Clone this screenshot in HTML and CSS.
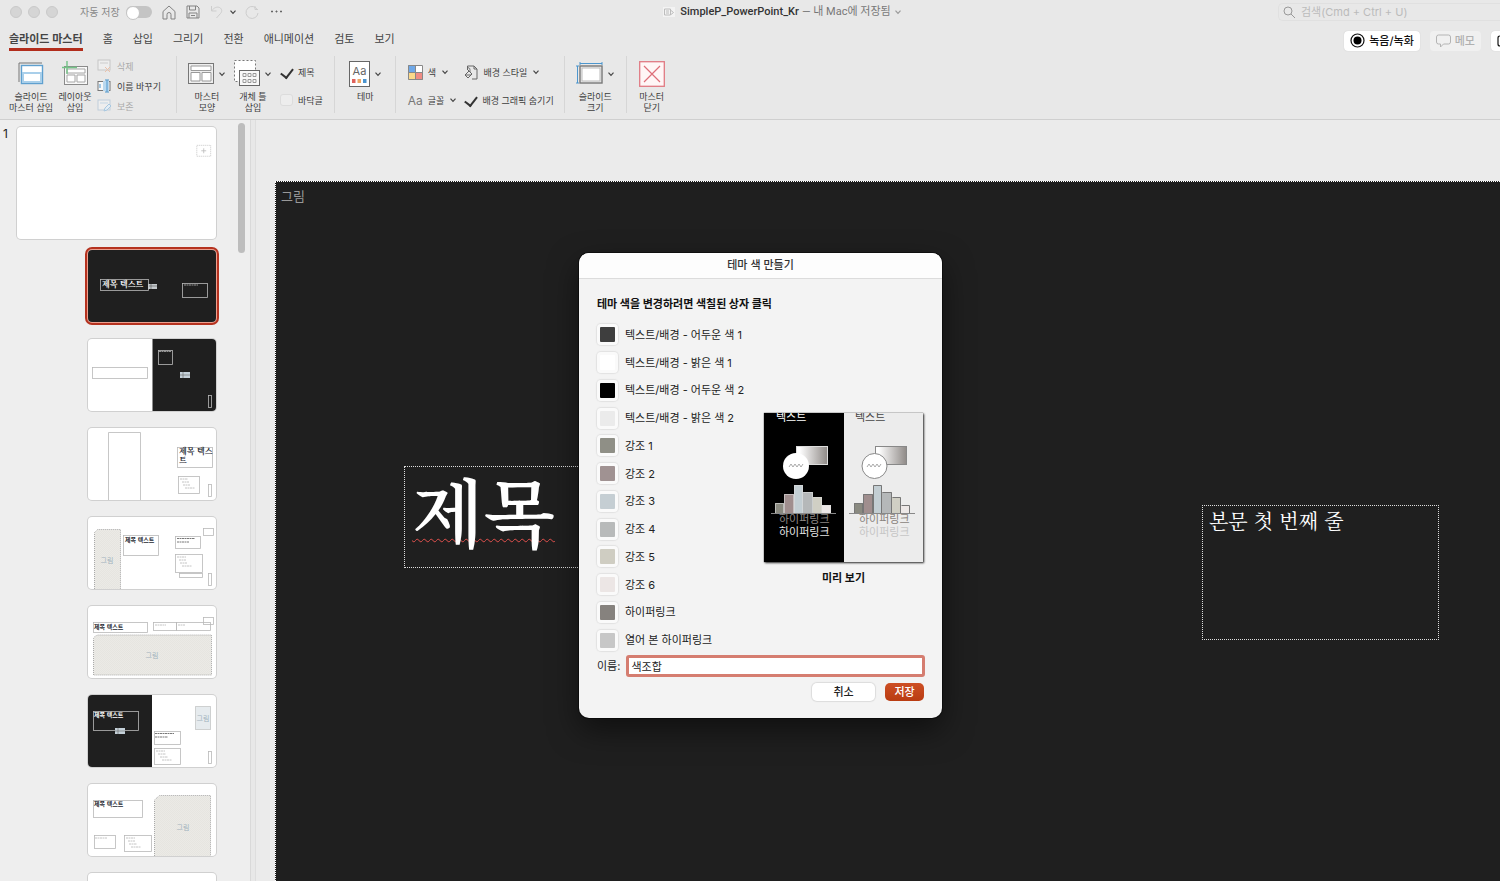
FILE: index.html
```html
<!DOCTYPE html>
<html lang="ko">
<head>
<meta charset="utf-8">
<title>SimpleP_PowerPoint_Kr</title>
<link rel="stylesheet" href="styles.css">
</head>
<body>
<svg class="defs" width="0" height="0" aria-hidden="true">
  <defs>
    <symbol id="chev" viewBox="0 0 8 8"><path d="M1.5 2.7 4 5.3l2.500-2.600" fill="none" stroke="currentColor" stroke-width="1.2"/></symbol>
    <pattern id="weave" width="2" height="2" patternUnits="userSpaceOnUse"><rect width="2" height="2" fill="#ebeae6"/><path d="M0 0h1v1H0zM1 1h1v1H1z" fill="#e6e5e0"/></pattern>
    <linearGradient id="fade"><stop offset=".1" stop-color="#fff"/><stop offset="1" stop-color="#8f8a87"/></linearGradient>
  </defs>
</svg>
<div class="app">
  <header class="chrome">
    <div class="titlebar">
      <div class="quick">
        <span class="lights"><i></i><i></i><i></i></span>
        <label class="autosave">자동 저장 <input type="checkbox" class="switch"></label>
        <button class="ico" aria-label="홈"><svg width="14" height="15" viewBox="0 0 14 15"><path d="M1 6.500 7 1l6 5.500V14H9V9.500a2 2 0 0 0-4 0V14H1z"/></svg></button>
        <button class="ico save-ico" aria-label="파일 저장"><svg width="14" height="14" viewBox="0 0 14 14"><path d="M1 1h10l2 2v10H1zM3.500 1v4h6V1M3 13V8h8v5M5 10.500h4"/></svg></button>
        <button class="ico dim" aria-label="실행 취소"><svg width="13" height="14" viewBox="0 0 13 14"><path d="M1.500 1v5h5M1.500 6C4 2.500 7 1.500 9.500 2.500c3 1.500 2.500 4.500 1 6L6.500 13"/></svg></button>
        <svg class="chev dark" width="8" height="8"><use href="#chev"/></svg>
        <button class="ico dim" aria-label="다시 실행"><svg width="14" height="14" viewBox="0 0 14 14"><path d="M10 1v3.500h3M12.500 5A6 6 0 1 0 13 8"/></svg></button>
        <button class="ico more" aria-label="더 보기"><svg width="13" height="4" viewBox="0 0 13 4"><path d="M1.500 1h1v1h-1zM6 1h1v1H6zM10.500 1h1v1h-1z"/></svg></button>
      </div>
      <div class="doc">
        <svg width="12" height="10" viewBox="0 0 12 10"><rect width="12" height="10" fill="#f3f3f3"/><path d="M1.500 2h6v6h-6zM3 4h3M3 6h3M8 3.500 10.500 5.500 8 7.500" fill="none" stroke="#bcbcbc"/></svg>
        <b>SimpleP_PowerPoint_Kr</b><span>— 내 Mac에 저장됨</span><svg class="chev" width="8" height="8"><use href="#chev"/></svg>
      </div>
      <label class="search">
        <svg width="13" height="13" viewBox="0 0 13 13"><circle cx="5" cy="5" r="4"/><path d="m8 8 4 4"/></svg>
        <input type="text" placeholder="검색(Cmd + Ctrl + U)" aria-label="검색">
      </label>
    </div>

    <div class="tabrow">
      <nav class="tabs">
        <a href="#" class="on">슬라이드 마스터</a><a href="#">홈</a><a href="#">삽입</a><a href="#">그리기</a><a href="#">전환</a><a href="#">애니메이션</a><a href="#">검토</a><a href="#">보기</a>
      </nav>
      <div class="actions">
        <button class="pill"><svg width="15" height="15" viewBox="0 0 15 15"><circle cx="7.500" cy="7.500" r="6.500" fill="none" stroke="#111" stroke-width="1.200"/><circle cx="7.500" cy="7.500" r="4" fill="#000"/></svg>녹음/녹화</button>
        <button class="pill off"><svg width="15" height="14" viewBox="0 0 15 14"><path d="M2.500 1h10q2 0 2 2v5q0 2-2 2H7.500L4.500 13v-3h-2q-2 0-2-2V3q0-2 2-2z" fill="none" stroke="#b4b4b4"/></svg>메모</button>
        <button class="pill edge" aria-label="공유"><svg width="12" height="12" viewBox="0 0 12 12"><path d="M6 1H3Q1 1 1 3v6q0 2 2 2h6" fill="none" stroke="#111" stroke-width="1.200"/></svg></button>
      </div>
    </div>

    <div class="ribbon">
      <section class="group g1">
        <button class="big w44"><span class="pic"><svg width="26" height="23" viewBox="0 0 26 23"><path d="M1 20V1h23" fill="none" stroke="#777"/><rect x="3.500" y="3.500" width="21" height="18" fill="#fff" stroke="#5fa0cf" stroke-width="1.400"/><path d="M5 5h18v5H5z" fill="#fff"/><path d="M4 10h20v11H4z" fill="#a9cfea"/><rect x="6" y="12" width="16" height="7" fill="#fff"/></svg></span><span class="cap">슬라이드<br>마스터 삽입</span></button>
        <button class="big w34"><span class="pic"><svg width="27" height="25" viewBox="0 0 27 25"><rect x="2.500" y="5.500" width="23" height="18" fill="#f8f8f8" stroke="#8a8a8a"/><path d="M5 8h18v4H5zM5 14h8v7H5zM15 14h8v7h-8z" fill="#fff" stroke="#a5a5a5"/><path d="M5 0v13M0 6.500h15" stroke="#73c386" stroke-width="1.400"/></svg></span><span class="cap">레이아웃<br>삽입</span></button>
        <div class="stack">
          <button class="mini off"><svg width="15" height="14" viewBox="0 0 15 14"><rect x="1" y="1" width="12" height="10" fill="#eee" stroke="#c6c6c6"/><path d="M3 4h8" stroke="#ccc"/><path d="m8 8 5 5m0-5-5 5" stroke="#ecc0a8"/></svg>삭제</button>
          <button class="mini"><svg width="15" height="14" viewBox="0 0 15 14"><rect x="1" y="2.500" width="12" height="9" fill="#f8f8f8" stroke="#777"/><rect x="6" y="2" width="6" height="10" fill="#b9d8ef"/><path d="M8 1h4M10 1v12M8 13h4M3 5v4" stroke="#4d96cd"/></svg>이름 바꾸기</button>
          <button class="mini off"><svg width="15" height="14" viewBox="0 0 15 14"><rect x="1" y="1" width="12" height="10" fill="#eee" stroke="#bfcedb"/><path d="M3 4h8" stroke="#c3d6e5"/><path d="m7 12 1-3 4-4 2 2-4 4z" fill="#e3edf5" stroke="#a8c8e0"/></svg>보존</button>
        </div>
      </section>
      <section class="group g2">
        <button class="big"><span class="pic"><svg width="26" height="21" viewBox="0 0 26 21"><rect x=".5" y=".5" width="25" height="20" fill="#eee" stroke="#777"/><path d="M3 3h20v4.500H3zM3 9.500h9V18H3zM14 9.500h9V18h-9z" fill="#fff" stroke="#999"/></svg><svg class="chev dark" width="8" height="8"><use href="#chev"/></svg></span><span class="cap">마스터<br>모양</span></button>
        <button class="big"><span class="pic"><svg width="26" height="27" viewBox="0 0 26 27"><rect x=".5" y=".5" width="21" height="21" fill="#fff" stroke="#777" stroke-dasharray="2 2"/><rect x="5.500" y="10.500" width="20" height="15" fill="#f8f8f8" stroke="#666"/><path d="M9 13.500h3v3H9zm5 0h3v3h-3zm5 0h3v3h-3zM9 19.500h3v3H9zm5 0h3v3h-3zm5 0h3v3h-3z" fill="none" stroke="#999"/></svg><svg class="chev dark" width="8" height="8"><use href="#chev"/></svg></span><span class="cap">개체 틀<br>삽입</span></button>
        <div class="rows">
          <label class="mini"><input type="checkbox" class="tick" checked>제목</label>
          <label class="mini"><input type="checkbox" class="tick">바닥글</label>
        </div>
      </section>
      <section class="group g3">
        <button class="big"><span class="pic"><svg width="21" height="26" viewBox="0 0 21 26"><rect x=".5" y=".5" width="20" height="25" fill="#fff" stroke="#666"/><text x="10.500" y="14" text-anchor="middle" class="aa">Aa</text><path d="M3 18h3.500v4H3z" fill="#e0625c"/><path d="M8.500 18H12v4H8.500z" fill="#eda764"/><path d="M14 18h3.500v4H14z" fill="#4a94cf"/></svg><svg class="chev dark" width="8" height="8"><use href="#chev"/></svg></span><span class="cap">테마</span></button>
      </section>
      <section class="group g4">
        <div class="rows">
          <button class="mini"><svg width="15" height="15" viewBox="0 0 15 15"><path d="M0 0h8v8H0z" fill="#6fa8e8"/><path d="M8 0h7v8H8z" fill="#fff"/><path d="M0 8h8v7H0z" fill="#fbd98a"/><path d="M8 8h7v7H8z" fill="#f08c84"/><path d="M.5.5h14v14H.5zM7.500 0v15M0 7.500h15" fill="none" stroke="#888"/></svg>색<svg class="chev dark" width="8" height="8"><use href="#chev"/></svg></button>
          <button class="mini"><span class="aa-lg">Aa</span>글꼴<svg class="chev dark" width="8" height="8"><use href="#chev"/></svg></button>
        </div>
        <div class="rows">
          <button class="mini"><svg width="14" height="15" viewBox="0 0 14 15"><path d="M3.500 5V1H10l3 3v10H8M10 1v3h3M4 5l4 4-4 4-3-3 4-4M1 10h6M4 3c2-1 2 2 2 4" fill="none" stroke="#666"/></svg>배경 스타일<svg class="chev dark" width="8" height="8"><use href="#chev"/></svg></button>
          <label class="mini"><input type="checkbox" class="tick" checked>배경 그래픽 숨기기</label>
        </div>
      </section>
      <section class="group g5">
        <button class="big"><span class="pic"><svg width="27" height="23" viewBox="0 0 27 23"><path d="M4 1.500h22M1.500 4v17M4 0v3M26 0v3M0 4h3M0 21h3" stroke="#4d96cd"/><rect x="4" y="4" width="22" height="17" fill="#eee" stroke="#777" stroke-width="1.400"/><rect x="6" y="6" width="18" height="13" fill="#fff" stroke="#bbb"/></svg><svg class="chev dark" width="8" height="8"><use href="#chev"/></svg></span><span class="cap">슬라이드<br>크기</span></button>
      </section>
      <section class="group g6">
        <button class="big"><span class="pic"><svg width="26" height="26" viewBox="0 0 26 26"><rect x=".7" y=".7" width="24.600" height="24.600" fill="#fff6f6" stroke="#e07a83" stroke-width="1.300"/><path d="m5 5 16 16M21 5 5 21" stroke="#dd6f79" stroke-width="1.200"/></svg></span><span class="cap">마스터<br>닫기</span></button>
      </section>
    </div>
  </header>

  <main class="work">
    <aside class="panel">
      <span class="num">1</span>
      <div class="thumbs">
        <button class="thumb master" aria-label="슬라이드 마스터"><svg viewBox="0 0 199 113"><g class="bx"><rect x="180.500" y="18.500" width="14" height="11" stroke-dasharray="1 1"/><path d="M185 24h5M187.500 21.500v5"/></g></svg></button>
        <button class="thumb on" aria-label="제목 레이아웃"><svg viewBox="0 0 128 72"><rect width="128" height="72" fill="#1f1f1f"/><g class="bx"><rect x="12.500" y="29.500" width="48" height="11"/><rect x="94.500" y="33.500" width="25" height="14"/></g><path d="M96 35h14" class="ln"/><path d="M60 34h9v5h-9z" fill="#c4c9cc"/><path d="M61 36h8M63 34v5" stroke="#555" stroke-width=".6"/><text x="14" y="37" class="t8 lt">제목 텍스트</text></svg></button>
        <button class="thumb" aria-label="레이아웃 2"><svg viewBox="0 0 128 72"><path d="M64.500 0H128v72H64.500z" fill="#1f1f1f"/><g class="bx"><rect x="4.500" y="28.500" width="55" height="11"/><rect x="70.500" y="11.500" width="14" height="14"/><rect x="120.500" y="56.500" width="3" height="12"/></g><path d="M71 12.500h12" class="ln"/><path d="M92 33h10v6H92z" fill="#c4d0d8"/><path d="M92 36h10M95 33v6" stroke="#666" stroke-width=".6"/></svg></button>
        <button class="thumb" aria-label="레이아웃 3"><svg viewBox="0 0 128 72"><g class="bx"><path d="M20.500 72V4.500h32V72"/><rect x="89.500" y="19.500" width="35" height="20"/><rect x="90.500" y="48.500" width="21" height="17"/><rect x="120.500" y="56.500" width="3" height="12"/></g><path d="M92 51h8M94 54h7M95 57h7M97 60h10" class="ln"/><text x="91" y="26" class="t8">제목 텍스</text><text x="91" y="35" class="t8">트</text></svg></button>
        <button class="thumb" aria-label="레이아웃 4"><svg viewBox="0 0 128 72"><path d="M6.500 72V15.500l3-3h23V72" fill="url(#weave)" stroke="#aaa" stroke-dasharray="1 1"/><text x="19" y="46" text-anchor="middle" class="ph">그림</text><g class="bx"><rect x="35.500" y="18.500" width="35" height="20"/><rect x="87.500" y="19.500" width="25" height="12"/><rect x="115.500" y="11.500" width="10" height="7"/><rect x="87.500" y="37.500" width="27" height="18"/><rect x="91.500" y="56.500" width="23" height="4"/><rect x="120.500" y="56.500" width="3" height="12"/></g><path d="M89 21.500h18M89 25h12" class="ln dk"/><path d="M89 40h9M91 43h7M92 46h7M94 49h10" class="ln"/><text x="37" y="25" class="t6">제목 텍스트</text></svg></button>
        <button class="thumb" aria-label="레이아웃 5"><svg viewBox="0 0 128 72"><path d="M5.500 69V32.500q1-3 5-3.500h113v40z" fill="url(#weave)" stroke="#aaa" stroke-dasharray="1 1"/><text x="64" y="52" text-anchor="middle" class="ph">그림</text><g class="bx"><rect x="5.500" y="16.500" width="54" height="10"/><rect x="65.500" y="16.500" width="23" height="8"/><rect x="88.500" y="16.500" width="34" height="8"/><rect x="115.500" y="11.500" width="10" height="7"/></g><path d="M67 19h11M90 19h7" class="ln"/><text x="6" y="23" class="t6">제목 텍스트</text></svg></button>
        <button class="thumb" aria-label="레이아웃 6"><svg viewBox="0 0 128 72"><path d="M0 0h64v72H0z" fill="#1f1f1f"/><g class="bx"><rect x="5.500" y="16.500" width="45" height="19"/><rect x="66.500" y="36.500" width="26" height="13"/><rect x="66.500" y="53.500" width="26" height="16"/><rect x="120.500" y="56.500" width="3" height="12"/></g><path d="M27 33h10v6H27z" fill="#c4d0d8"/><path d="M27 36h10M30 33v6" stroke="#666" stroke-width=".6"/><rect x="107.500" y="11.500" width="15" height="23" fill="#e6ebee" stroke="#aaa" stroke-dasharray="1 1"/><text x="115" y="26" text-anchor="middle" class="ph">그림</text><path d="M67 38.500h19M67 42h13" class="ln dk"/><path d="M68 56h9M70 59h8M72 62h8M74 65h10" class="ln"/><text x="6" y="22" class="t6 lt">제목 텍스트</text></svg></button>
        <button class="thumb" aria-label="레이아웃 7"><svg viewBox="0 0 128 72"><path d="M66.500 72V16l5-4.500h51V72" fill="url(#weave)" stroke="#aaa" stroke-dasharray="1 1"/><text x="95" y="46" text-anchor="middle" class="ph">그림</text><g class="bx"><rect x="5.500" y="16.500" width="49" height="17"/><rect x="6.500" y="51.500" width="21" height="13"/><rect x="36.500" y="51.500" width="27" height="16"/></g><path d="M7 54h12M38 54h9M40 57h7M41 60h8M43 63h10" class="ln"/><text x="6" y="22" class="t6">제목 텍스트</text></svg></button>
        <button class="thumb" aria-label="레이아웃 8"><svg viewBox="0 0 128 72"></svg></button>
      </div>
      <i class="scroll"></i>
    </aside>

    <div class="canvas">
      <div class="slide">
        <span class="pic-label">그림</span>
        <div class="title-box"><span class="misspelt">제목</span></div>
        <div class="body-box">본문 첫 번째 줄</div>
      </div>
    </div>
  </main>

  <form class="dialog" role="dialog" aria-labelledby="dlg">
    <h1 id="dlg">테마 색 만들기</h1>
    <div class="content">
      <h2>테마 색을 변경하려면 색칠된 상자 클릭</h2>
      <div class="cols">
        <div class="swatches">
          <label><button type="button" class="sw c1"></button>텍스트/배경 - 어두운 색 1</label>
          <label><button type="button" class="sw c2"></button>텍스트/배경 - 밝은 색 1</label>
          <label><button type="button" class="sw c3"></button>텍스트/배경 - 어두운 색 2</label>
          <label><button type="button" class="sw c4"></button>텍스트/배경 - 밝은 색 2</label>
          <label><button type="button" class="sw c5"></button>강조 1</label>
          <label><button type="button" class="sw c6"></button>강조 2</label>
          <label><button type="button" class="sw c7"></button>강조 3</label>
          <label><button type="button" class="sw c8"></button>강조 4</label>
          <label><button type="button" class="sw c9"></button>강조 5</label>
          <label><button type="button" class="sw c10"></button>강조 6</label>
          <label><button type="button" class="sw c11"></button>하이퍼링크</label>
          <label><button type="button" class="sw c12"></button>열어 본 하이퍼링크</label>
        </div>
        <figure class="preview">
          <svg width="159" height="149" viewBox="0 0 159 149">
            <rect width="159" height="149" fill="#ececec"/><rect width="80" height="149" fill="#000"/>
            <g class="pt"><text x="12" y="8" fill="#fff">텍스트</text><text x="91" y="8" fill="#444">텍스트</text>
            <text x="15" y="110" fill="#8a8480">하이퍼링크</text><text x="15" y="123" fill="#e4e4e4">하이퍼링크</text>
            <text x="95" y="110" fill="#8a8480">하이퍼링크</text><text x="95" y="123" fill="#c6c6c6">하이퍼링크</text></g>
            <rect x="32.500" y="33.500" width="31" height="18" fill="url(#fade)" stroke="#ddd"/><circle cx="32" cy="53" r="13" fill="#fff"/><path d="m25 54 2-3 2 3 2-3 2 3 2-3 2 3 2-3" fill="none" stroke="#aaa"/>
            <rect x="111.500" y="33.500" width="31" height="18" fill="url(#fade)" stroke="#888"/><circle cx="110.500" cy="53" r="12.500" fill="#fff" stroke="#888"/><path d="m103 54 2-3 2 3 2-3 2 3 2-3 2 3 2-3" fill="none" stroke="#aaa"/>
            <g id="bars"><path d="M11 90h9v10h-9z" fill="#8a8a80"/><path d="M20 81h10v19H20z" fill="#a08e8e"/><path d="M39 79h10v21H39z" fill="#b5b8b9"/><path d="M49 84h9v16h-9z" fill="#d0cfc4"/><path d="M58 92h9v8h-9z" fill="#ede8e7"/><path d="M30 72h9v28h-9z" fill="#c3ced3"/></g>
            <use href="#bars" x="79"/><path d="M11.500 100V90.500h8V100M20.500 100V81.500h9V100M30.500 100V72.500h8V100M39.500 79.500h9V100M49.500 84.500h8V100M58.500 92.500h8V100" fill="none" stroke="#ddd" stroke-opacity=".6"/>
            <path d="M90.500 100V90.500h8V100M99.500 100V81.500h9V100M109.500 100V72.500h8V100M118.500 79.500h9V100M128.500 84.500h8V100M137.500 92.500h8V100" fill="none" stroke="#777"/><path d="M7 100.500h65M85 100.500h66" stroke="#888"/>
          </svg>
          <figcaption>미리 보기</figcaption>
        </figure>
      </div>
      <div class="name"><label for="nm">이름:</label><input id="nm" type="text" value="색조합"></div>
      <div class="btns"><button type="button" class="cancel">취소</button><button type="button" class="ok">저장</button></div>
    </div>
  </form>
</div>
</body>
</html>
```

FILE: styles.css
```css
* { box-sizing: border-box; }
body { margin: 0; font: 11px/14px Inter, "Noto Sans CJK KR", sans-serif; color: #222; }
button { border: 0; padding: 0; background: none; font: inherit; color: inherit; }
input { font: inherit; color: inherit; }
svg { display: block; flex: none; }
.defs { position: absolute; }

.app { position: relative; display: flex; flex-direction: column; height: 100vh; overflow: hidden; background: #e8e8e8; }
.chrome { flex: none; background: #e8e8e8; border-bottom: 1px solid #cfcfcf; padding-bottom: 6px; color: #3c3c3c; }

/* title bar */
.titlebar { display: grid; grid-template-columns: 1fr auto 1fr; align-items: center; height: 24px; }
.quick { display: flex; align-items: center; padding-left: 10px; color: #888; }
.lights { display: flex; gap: 6px; margin-right: 22px; }
.lights i { width: 12px; height: 12px; border-radius: 50%; background: #d5d5d5; border: 1px solid #c9c9c9; }
.autosave { display: flex; align-items: center; gap: 6px; font-size: 10px; margin-right: 10px; }
.switch { appearance: none; margin: 0; width: 26px; height: 12px; border-radius: 6px; background: #c4c4c4; display: flex; }
.switch::before { content: ""; width: 12px; height: 12px; border-radius: 50%; background: #fff; border: 1px solid #c4c4c4; }
.ico { margin-right: 10px; }
.ico path { fill: none; stroke: #838383; stroke-width: 1; }
.dim path { stroke: #cdcdcd; }
.quick .chev { margin: 0 8px 0 -4px; }
.more { margin-left: 1px; }
.more path { fill: #666; stroke: #666; }
.chev { color: #999; }
.chev.dark { color: #444; }
.doc { display: flex; align-items: center; gap: 3px; padding-left: 65px; font-family: Roboto, "Noto Sans CJK KR", sans-serif; color: #777; }
.doc b { font-weight: 500; color: #333; margin-left: 2px; }
.search { justify-self: end; display: flex; align-items: center; gap: 5px; width: 222px; height: 18px; padding-left: 4px; border: 1px solid #e0e0e0; border-right: 0; border-radius: 5px 0 0 5px; }
.search svg { fill: none; stroke: #999; }
.search input { flex: 1; min-width: 0; border: 0; padding: 0; background: none; outline: 0; }
.search input::placeholder { color: #bbb; }

/* tabs */
.tabrow { display: flex; justify-content: space-between; align-items: center; height: 32px; padding-left: 9px; }
.tabs { display: flex; gap: 20px; }
.tabs a { color: #444; text-decoration: none; padding: 3px 0 2px; border-bottom: 3px solid transparent; }
.tabs .on { font-weight: 600; border-color: #b22d1c; }
.actions { display: flex; gap: 10px; margin-top: 1px; }
.pill { display: flex; align-items: center; gap: 4px; height: 20px; padding: 0 6px; border-radius: 4px; background: #fff; color: #111; font-weight: 500; box-shadow: 0 0 1px #bbb; }
.pill.off { background: #f0f0f0; color: #b0b0b0; box-shadow: none; }
.pill.edge { width: 9px; padding: 0; overflow: hidden; border-radius: 4px 0 0 4px; }
.edge svg { margin-left: 6px; }

/* ribbon */
.ribbon { display: flex; height: 57px; padding-left: 9px; font-size: 9px; line-height: 11px; }
.group { display: flex; border-right: 1px solid #d6d6d6; }
.group:last-child { border: 0; }
.g1 { gap: 5px; padding-right: 15px; }
.g2 { gap: 8px; padding: 0 11px; }
.g3 { padding: 0 13px 0 14px; }
.g4 { gap: 7px; padding: 0 10px 0 12px; }
.g5 { padding: 0 11px; }
.g6 { padding-left: 12px; }
.big { display: flex; flex-direction: column; align-items: center; gap: 4px; padding-top: 4px; white-space: nowrap; }
.w44 { width: 44px; }
.w34 { width: 34px; }
.pic { display: flex; align-items: center; gap: 4px; height: 27px; }
.stack { display: flex; flex-direction: column; gap: 6px; padding-top: 3px; }
.mini { display: flex; align-items: center; gap: 5px; height: 14px; white-space: nowrap; }
.mini.off { color: #aaa; }
.rows { display: flex; flex-direction: column; gap: 14px; padding-top: 9px; }
.tick { appearance: none; margin: 0; width: 13px; height: 12px; border-radius: 3px; background: #ededed; border: 1px solid #dcdcdc; }
.tick:checked { background: none; border: 0; }
.tick:checked::before { content: ""; display: block; width: 6px; height: 10px; margin-left: 3px; border: solid #333; border-width: 0 2px 2px 0; transform: rotate(38deg); }
.aa { font: 11px Inter, sans-serif; fill: #666; }
.aa-lg { font-size: 12px; color: #777; }

/* slide list */
.work { flex: 1; display: flex; min-height: 0; }
.panel { position: relative; flex: none; width: 251px; overflow: hidden; padding: 7px 34px 0 0; background: #eee; border-right: 1px solid #d9d9d9; display: flex; justify-content: space-between; }
.num { padding-left: 3px; font-size: 12px; }
.thumbs { display: flex; flex-direction: column; align-items: flex-end; gap: 17px; }
.thumb { flex: none; width: 128px; height: 72px; border-radius: 4px; background: #fff; overflow: hidden; box-shadow: 0 0 0 1px #d0d0d0; }
.thumb.master { width: 199px; height: 112px; margin-bottom: -6px; }
.thumb.on { box-shadow: 0 0 0 1px #eba090, 0 0 0 3px #b5321f; }
.thumb svg { width: 100%; height: 100%; }
.bx { fill: none; stroke: #b9b9b9; stroke-width: .8; }
.ln { stroke: #b5b5b5; stroke-width: .8; stroke-dasharray: 2 .5; }
.ln.dk { stroke: #555; }
.t8 { font: 700 8px "Noto Serif CJK KR", "Noto Sans CJK KR", serif; fill: #1c2730; }
.t6 { font: 700 6px "Noto Sans CJK KR", sans-serif; fill: #1c2730; }
.t8.lt, .t6.lt { fill: #fff; }
.ph { font: 7px "Noto Sans CJK KR", sans-serif; fill: #9fb2bd; }
.scroll { position: absolute; top: 3px; right: 5px; width: 7px; height: 130px; border-radius: 4px; background: #bdbdbd; }

/* editing area */
.canvas { flex: 1; display: flex; min-width: 0; margin-left: 4px; padding: 61px 0 0 19px; border-left: 1px solid #dedede; background: #ebebeb; }
.slide { position: relative; flex: 1; background: #1f1f1f; border: dotted #fff; border-width: 1px 0 0 1px; color: #fff; }
.pic-label { position: absolute; left: 5px; top: 6px; font-size: 13px; line-height: 17px; color: #999; }
.title-box { position: absolute; left: 128px; top: 284px; width: 520px; height: 102px; padding-left: 7px; border: 1px dotted #ddd; font: 600 74px/84px "Noto Serif CJK KR", "Noto Sans CJK KR", serif; white-space: nowrap; }
.misspelt { text-decoration: underline wavy #e0504c 1px; text-underline-offset: -3px; text-decoration-skip-ink: none; }
.body-box { position: absolute; left: 926px; top: 323px; width: 237px; height: 135px; padding: 2px 6px; border: 1px dotted #ddd; font: 20px/25px "Noto Serif CJK KR", "Noto Sans CJK KR", serif; white-space: nowrap; }

/* dialog */
.dialog { position: absolute; left: calc(50% - 171px); top: 253px; width: 363px; border-radius: 10px; overflow: hidden; background: #f3f3f3; box-shadow: 0 12px 30px rgba(0, 0, 0, .5), 0 0 0 1px #111; }
.dialog h1 { margin: 0; height: 26px; padding-top: 5px; background: #fdfdfd; border-bottom: 1px solid #dcdcdc; text-align: center; font-size: 11px; line-height: 14px; font-weight: 500; color: #333; }
.content { padding: 18px 17px 17px 18px; }
.dialog h2 { margin: 0 0 10px; font-size: 11px; line-height: 14px; font-weight: 700; color: #111; }
.cols { display: flex; justify-content: space-between; align-items: flex-start; }
.swatches { display: grid; grid-template-rows: repeat(12, 1fr); height: 333px; }
.swatches label { display: flex; align-items: center; gap: 7px; }
.sw { width: 21px; height: 21px; border-radius: 4px; border: 3px solid #fafafa; background: #fff; box-shadow: 0 0 1px 1px #e2e2e2; }
.c1 { background: #3e3e3e; } .c2 { background: #fff; } .c3 { background: #000; } .c4 { background: #ebebeb; }
.c5 { background: #8f8f86; } .c6 { background: #a09292; } .c7 { background: #c5ced3; } .c8 { background: #b8baba; }
.c9 { background: #cfcdc2; } .c10 { background: #ece6e5; } .c11 { background: #86827e; } .c12 { background: #c7c7c7; }
.preview { margin: 92px 2px 0 0; text-align: center; font-weight: 700; color: #111; }
.preview svg { box-shadow: 1px 1px 2px #333, 0 0 1px #333; }
.preview figcaption { margin-top: 9px; }
.pt { font: 11px "Noto Sans CJK KR", sans-serif; }
.name { display: flex; align-items: center; gap: 6px; margin-top: 1px; }
.name input { flex: 1; min-width: 0; height: 22px; padding: 0 2px; border: 3px solid #d57d70; border-radius: 3px; background: #fff; outline: 0; }
.btns { display: flex; justify-content: flex-end; gap: 10px; padding: 6px 1px 0 0; }
.btns button { height: 18px; border-radius: 5px; font-weight: 500; }
.cancel { width: 63px; background: #fff; box-shadow: 0 0 1px 1px #dcdcdc; }
.btns .ok { width: 39px; background: linear-gradient(#cd4f24, #b93c12); color: #fff; }
```
